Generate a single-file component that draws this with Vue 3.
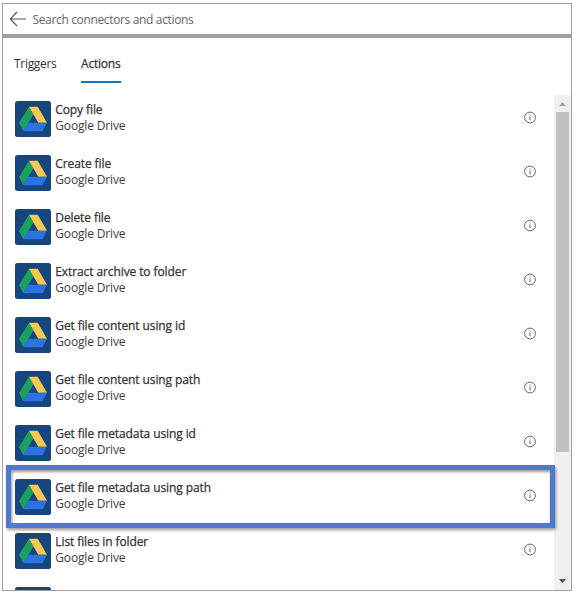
<script setup>
const actions = [
  { name: 'Copy file' },
  { name: 'Create file' },
  { name: 'Delete file' },
  { name: 'Extract archive to folder' },
  { name: 'Get file content using id' },
  { name: 'Get file content using path' },
  { name: 'Get file metadata using id' },
  { name: 'Get file metadata using path', highlighted: true },
  { name: 'List files in folder' },
  { name: '' },
]
</script>

<template>
  <main class="picker">
    <header class="search">
      <svg class="back" width="18" height="16" viewBox="0 0 18 16">
        <path d="M8 1 L1.2 8 L8 15 M1.2 8 H17" />
      </svg>
      <span class="search-text">Search connectors and actions</span>
    </header>
    <nav class="tabs">
      <span class="tab">Triggers</span>
      <span class="tab active">Actions</span>
    </nav>
    <section class="body">
      <ul class="list">
        <li v-for="(action, i) in actions" :key="i" class="row">
          <svg class="logo" width="36" height="36" viewBox="0 0 36 36">
            <rect width="36" height="36" rx="2.5" fill="#17457d" />
            <path d="M14 5.7 L18.4 13.2 L8.4 30.3 L4 21.9 Z" fill="#1ba15f" />
            <path d="M14 5.7 H22.7 L32 21.8 H23.3 Z" fill="#f8c951" />
            <path d="M13.4 21.8 H32 L27.5 30.3 H8.4 Z" fill="#2a72e5" />
          </svg>
          <div v-if="action.name" class="labels">
            <span class="name">{{ action.name }}</span>
            <span class="connector">Google Drive</span>
          </div>
          <svg v-if="action.name" class="info" width="13" height="13" viewBox="0 0 13 13">
            <circle cx="6" cy="6.5" r="5.4" />
            <path d="M6 5.5 V9.3 M6 3.6 V4.6" />
          </svg>
          <div v-if="action.highlighted" class="highlight"></div>
        </li>
      </ul>
      <div class="scrollbar">
        <svg class="arrow" width="17" height="17" viewBox="0 0 17 17">
          <path d="M5 11 L8.5 7 L12 11 Z" fill="#a3a3a3" />
        </svg>
        <div class="thumb"></div>
        <svg class="arrow" width="17" height="17" viewBox="0 0 17 17">
          <path d="M5 6 H12 L8.5 10 Z" fill="#505050" />
        </svg>
      </div>
    </section>
  </main>
</template>

<style>
body {
  background: #fff;
}
</style>

<style scoped>
.picker {
  box-sizing: border-box;
  width: 570px;
  height: 588px;
  margin: 3px 0 0 2px;
  border: 1px solid #a0a0a0;
  display: flex;
  flex-direction: column;
  background: #fff;
  color: #333;
  font-family: "Open Sans", "Noto Sans", sans-serif;
  font-size: 12px;
  line-height: 16px;
}
.search {
  box-sizing: border-box;
  height: 34px;
  flex: none;
  padding: 0 0 0 6px;
  border-bottom: 4px solid #a0a0a0;
  display: flex;
  align-items: center;
}
.back {
  fill: none;
  stroke: #555;
  stroke-width: 1.1;
}
.search-text {
  margin: 2px 0 0 5.5px;
  color: #666;
  letter-spacing: -0.35px;
}
.tabs {
  height: 57px;
  flex: none;
  display: flex;
  gap: 24px;
  padding-left: 11px;
}
.tab {
  box-sizing: border-box;
  height: 45px;
  width: 43px;
  padding-top: 18px;
  white-space: nowrap;
  letter-spacing: -0.3px;
}
.tab.active {
  width: 40px;
  border-bottom: 2px solid #0b78cf;
  -webkit-text-stroke: 0.25px #333;
  letter-spacing: -0.2px;
}
.body {
  flex: 1;
  min-height: 0;
  display: flex;
  overflow: hidden;
}
.list {
  flex: 1;
  margin: 0;
  padding: 6px 0 0 12px;
  list-style: none;
}
.row {
  position: relative;
  height: 54px;
  display: flex;
  align-items: flex-start;
}
.logo {
  flex: none;
}
.labels {
  display: flex;
  flex-direction: column;
  margin-left: 4.3px;
  padding-top: 1px;
  flex: 1;
}
.name {
  -webkit-text-stroke: 0.25px #333;
  letter-spacing: -0.1px;
}
.connector {
  color: #3c3c3c;
  letter-spacing: -0.15px;
}
.info {
  flex: none;
  margin: 10px 17px 0 0;
  fill: none;
  stroke: #555;
  stroke-width: 0.9;
}
.highlight {
  position: absolute;
  box-sizing: border-box;
  left: -9px;
  top: -14px;
  width: 549px;
  height: 63px;
  border: 5px solid #4b7bcc;
  box-shadow: 1px 2px 3px #0006, inset 1px 2px 3px #0006;
}
.scrollbar {
  width: 17px;
  display: flex;
  flex-direction: column;
  background: #f0f0f0;
}
.arrow {
  flex: none;
}
.arrow:last-child {
  margin-top: auto;
}
.thumb {
  width: 13px;
  height: 340px;
  margin-left: 2px;
  background: #c1c1c1;
}
</style>
